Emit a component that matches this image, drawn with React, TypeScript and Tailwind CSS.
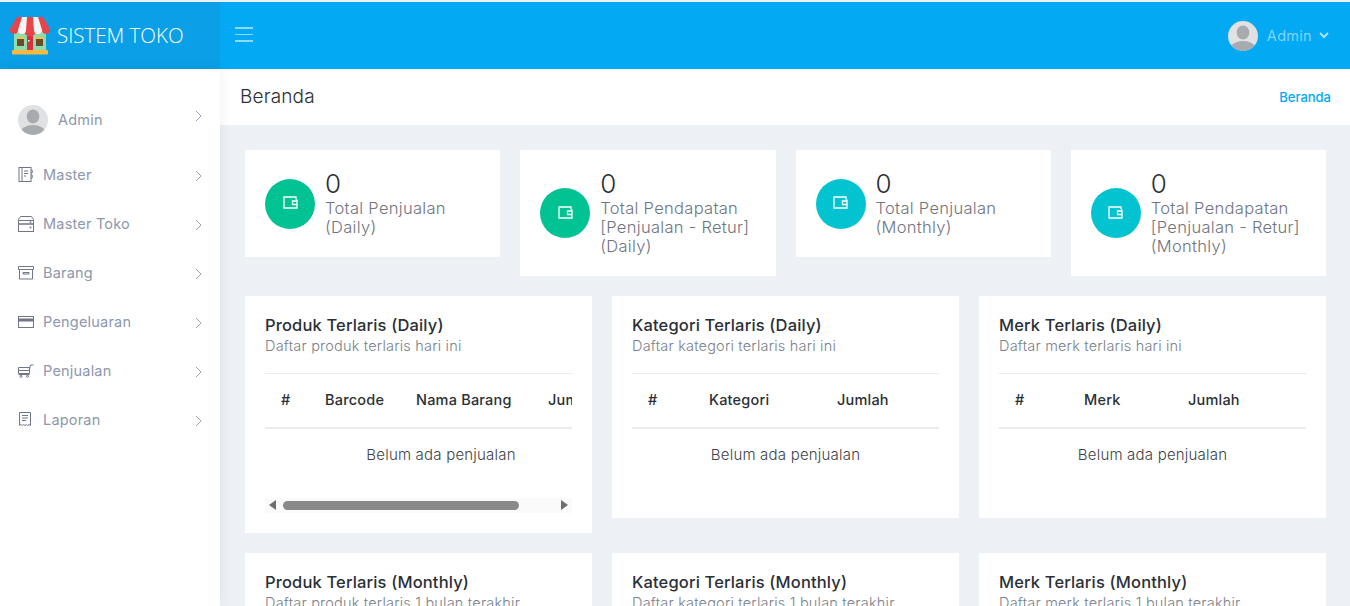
import React from "react";

const Avatar = () => (
  <svg viewBox="0 0 30 30" className="w-[30px] h-[30px] shrink-0 block">
    <defs>
      <clipPath id="av"><circle cx="15" cy="15" r="15" /></clipPath>
    </defs>
    <g clipPath="url(#av)">
      <rect width="30" height="30" fill="#dfe1e3" />
      <ellipse cx="15" cy="11.5" rx="6.3" ry="7" fill="#a8abae" />
      <ellipse cx="15" cy="27.5" rx="12.5" ry="7.5" fill="#a8abae" />
    </g>
  </svg>
);

const Logo = () => (
  <svg viewBox="0 0 40 38" className="w-10 h-[38px] shrink-0 block">
    <rect x="4" y="12" width="32" height="21" fill="#8fdcae" />
    <rect x="2" y="33" width="36" height="4.5" rx="1" fill="#f5b93f" />
    <rect x="7" y="20" width="7" height="9" fill="#6b4b2a" />
    <rect x="26" y="20" width="7" height="9" fill="#6b4b2a" />
    <rect x="7" y="20" width="7" height="2" fill="#f2c14e" />
    <rect x="26" y="20" width="7" height="2" fill="#f2c14e" />
    <rect x="17" y="17" width="6" height="16" fill="#d9303a" />
    <rect x="18" y="23" width="1.5" height="1.5" fill="#fff" />
    <path d="M7 0h26l7 12a4 4 0 0 1-8 1.500 4 4 0 0 1-6 0 4 4 0 0 1-12 0 4 4 0 0 1-6 0 4 4 0 0 1-8-1.500z" fill="#e8444c" />
    <path d="M12 0h5l-1 13a4 4 0 0 1-8 0zM23 0h5l4 13a4 4 0 0 1-8 0z" fill="#f4f4f4" />
  </svg>
);

const ic = "w-[15px] h-[15px] shrink-0";
const stroke = { fill: "none", stroke: "#6f768c", strokeWidth: 1 };
const Notepad = () => (
  <svg viewBox="0 0 15 15" className={ic} {...stroke}>
    <rect x="1" y="0.500" width="12" height="14" />
    <path d="M4 .5v14M6 4h4M6 6.500h4M6 9h2M13 3h1.200v3H13M13 8h1.200v3H13" />
  </svg>
);
const Server = () => (
  <svg viewBox="0 0 16 16" className="w-4 h-4 shrink-0" {...stroke}>
    <path d="M.5 8V3.500L2.500.5h11l2 3V8z" />
    <rect x="0.500" y="8" width="15" height="7.500" />
    <path d="M.5 4.500h15" />
    <circle cx="12.500" cy="6.200" r=".6" />
    <circle cx="12.500" cy="11.500" r=".6" />
  </svg>
);
const Archive = () => (
  <svg viewBox="0 0 16 15" className="w-4 h-[15px] shrink-0" {...stroke}>
    <path d="M.5 1.500h15v3H.5zM1.500 4.500v9.500h13V4.500M5 7.500h6v1.500H5z" />
  </svg>
);
const Card = () => (
  <svg viewBox="0 0 16 12" className="w-4 h-3 shrink-0">
    <rect x="0.500" y="0.500" width="15" height="11" fill="none" stroke="#6f768c" />
    <rect x="0.500" y="2.500" width="15" height="3" fill="#6f768c" />
  </svg>
);
const Cart = () => (
  <svg viewBox="0 0 16 14" className="w-4 h-[14px] shrink-0" {...stroke}>
    <path d="M.5 3.500h11v6H.5zM.5 6.500h11M11.500 5l1-4h3M.5 10.500h11" />
    <circle cx="3" cy="12.300" r="1" />
    <circle cx="9.500" cy="12.300" r="1" />
  </svg>
);
const Receipt = () => (
  <svg viewBox="0 0 14 15" className="w-[14px] h-[15px] shrink-0" {...stroke}>
    <path d="M1.500.5h11v13l-1.400-1-1.400 1-1.400-1-1.300 1-1.400-1-1.400 1-1.400-1-1.200 1zM4 3.500h6M4 6h6M4 8.500h4" />
  </svg>
);

const Chevron = ({ up = false }: { up?: boolean }) => (
  <svg viewBox="0 0 7 12" className={up ? "w-[7px] h-3 shrink-0 ml-auto -translate-y-[4px]" : "w-[7px] h-3 shrink-0 ml-auto translate-y-[1px]"} fill="none" stroke="#8d97ad" strokeWidth="0.900">
    <path d="M1 1l5 5-5 5" />
  </svg>
);

const Wallet = () => (
  <svg viewBox="0 0 15 13" className="w-[15px] h-[13px] -translate-y-[1px]" fill="none" stroke="#fff" strokeWidth="1.300">
    <path d="M14 3.500V12H1V1h12v2.500" />
    <path d="M14 5H9.500v3.500H14" />
  </svg>
);

const menu = [
  { label: "Master", icon: <Notepad /> },
  { label: "Master Toko", icon: <Server /> },
  { label: "Barang", icon: <Archive /> },
  { label: "Pengeluaran", icon: <Card /> },
  { label: "Penjualan", icon: <Cart /> },
  { label: "Laporan", icon: <Receipt /> },
];

const Stat = ({ color, label }: { color: string; label: React.ReactNode }) => (
  <div className="bg-white p-5 flex items-center gap-[10px]">
    <div className={`w-[50px] h-[50px] rounded-full flex items-center justify-center shrink-0 ${color}`}>
      <Wallet />
    </div>
    <div>
      <div className="text-[26px] leading-[27px] mb-[2px] font-light text-[#2b2f36]">0</div>
      <div className="text-[16.500px] leading-[19px] font-light text-[#6f7480] tracking-[0.300px]">{label}</div>
    </div>
  </div>
);

type Col = { label: string; cls: string };

const Panel = ({
  title,
  sub,
  cols,
  tableCls,
  scroll = false,
}: {
  title: string;
  sub: string;
  cols: Col[];
  tableCls: string;
  scroll?: boolean;
}) => (
  <div className="bg-white p-5">
    <div className="text-[16.500px] leading-[19px] font-medium text-[#2b2f36] tracking-[0.150px]">{title}</div>
    <div className="text-[14.500px] leading-[21px] font-light text-[#7a7f8a] tracking-[0.200px]">{sub}</div>
    <div className="overflow-hidden mt-[17px]">
      <table className={`table-fixed border-collapse ${tableCls}`}>
        <thead>
          <tr className="border-t border-[#e9ecef] border-b-2">
            {cols.map((c) => (
              <th key={c.label} className={`text-left pl-4 h-[54px] text-[14.500px] tracking-[0.200px] font-medium text-[#2b2f36] whitespace-nowrap ${c.cls}`}>
                {c.label}
              </th>
            ))}
          </tr>
        </thead>
        <tbody>
          <tr>
            <td colSpan={cols.length} className="text-center pt-[15px] pb-[17px] px-4 text-[15px] tracking-[0.200px] leading-[21px] font-light text-[#3e4249]">
              Belum ada penjualan
            </td>
          </tr>
        </tbody>
      </table>
    </div>
    {scroll ? (
      <div className="mt-4 h-[15px] bg-[#fafafa] flex items-center px-1">
        <span className="w-0 h-0 border-y-[5px] border-y-transparent border-r-[7px] border-r-[#6e6e6e]" />
        <span className="ml-[7px] w-[236px] h-[9px] rounded-full bg-[#8a8a8a]" />
        <span className="ml-auto w-0 h-0 border-y-[5px] border-y-transparent border-l-[7px] border-l-[#6e6e6e]" />
      </div>
    ) : (
      <div className="h-4" />
    )}
  </div>
);

const produk = [
  { label: "#", cls: "w-[44px]" },
  { label: "Barcode", cls: "w-[91px]" },
  { label: "Nama Barang", cls: "w-[132px]" },
  { label: "Jumlah", cls: "w-[85px]" },
];
const kategori = [
  { label: "#", cls: "w-[61px]" },
  { label: "Kategori", cls: "w-[128px]" },
  { label: "Jumlah", cls: "w-[118px]" },
];
const merk = [
  { label: "#", cls: "w-[69px]" },
  { label: "Merk", cls: "w-[104px]" },
  { label: "Jumlah", cls: "w-[134px]" },
];

export default function App() {
  return (
    <div className="h-screen overflow-hidden flex flex-col bg-[#edf1f5] pt-[2px] [font-family:Inter,sans-serif]">
      <header className="h-[67px] shrink-0 flex bg-[#03a9f3]">
        <div className="w-[220px] shrink-0 bg-[#0a9fe6] flex items-center pl-[10px] gap-[7px]">
          <Logo />
          <span className="text-[20.500px] font-light text-white [font-family:'Open_Sans',sans-serif]">SISTEM TOKO</span>
        </div>
        <div className="flex-1 flex items-center pl-[15px] pr-[21px]">
          <div className="flex flex-col gap-[5px] w-[18px] -translate-y-[1px]">
            <span className="h-[1.500px] bg-[#8edbfb]" />
            <span className="h-[1.500px] bg-[#8edbfb]" />
            <span className="h-[1.500px] bg-[#8edbfb]" />
          </div>
          <div className="ml-auto flex items-center">
            <Avatar />
            <span className="ml-[9px] text-[14.500px] tracking-[0.300px] text-[#80d4f9]">Admin</span>
            <svg viewBox="0 0 10 7" className="w-[10px] h-[7px] ml-[7px]" fill="none" stroke="#a8e2fb" strokeWidth="2">
              <path d="M1 1l4 4 4-4" />
            </svg>
          </div>
        </div>
      </header>
      <div className="flex-1 flex min-h-0">
        <aside className="relative z-10 w-[220px] shrink-0 bg-white pt-[21px] px-[18px] text-[14.500px] tracking-[0.200px] text-[#8d97ad] shadow-[1px_0_12px_rgba(0,0,0,0.06)]">
          <div className="h-[60px] flex items-center gap-[10px]">
            <Avatar />
            <span className="pb-[1px]">Admin</span>
            <Chevron up />
          </div>
          <nav>
            {menu.map((m) => (
              <div key={m.label} className="h-[49px] flex items-center">
                <span className="w-[25px] flex items-center">{m.icon}</span>
                <span>{m.label}</span>
                <Chevron />
              </div>
            ))}
          </nav>
        </aside>
        <main className="flex-1 min-w-0">
          <div className="h-[56px] bg-white flex items-center justify-between pl-5 pr-[19px]">
            <h1 className="text-[19px] tracking-[0.150px] font-light text-[#2b2f36]">Beranda</h1>
            <span className="text-[13px] pt-[1px] font-medium text-[#03a9f3]">Beranda</span>
          </div>
          <div className="pt-[25px] pl-[25px] pr-6 flex flex-col gap-5">
            <div className="grid grid-cols-4 gap-5 items-start">
              <Stat color="bg-[#00c292]" label={<>Total Penjualan<br />(Daily)</>} />
              <Stat color="bg-[#00c292]" label={<>Total Pendapatan<br />[Penjualan - Retur]<br />(Daily)</>} />
              <Stat color="bg-[#03c3d0]" label={<>Total Penjualan<br />(Monthly)</>} />
              <Stat color="bg-[#03c3d0]" label={<>Total Pendapatan<br />[Penjualan - Retur]<br />(Monthly)</>} />
            </div>
            <div className="grid grid-cols-3 gap-5 items-start">
              <Panel title="Produk Terlaris (Daily)" sub="Daftar produk terlaris hari ini" cols={produk} tableCls="w-[352px]" scroll />
              <Panel title="Kategori Terlaris (Daily)" sub="Daftar kategori terlaris hari ini" cols={kategori} tableCls="w-full" />
              <Panel title="Merk Terlaris (Daily)" sub="Daftar merk terlaris hari ini" cols={merk} tableCls="w-full" />
            </div>
            <div className="grid grid-cols-3 gap-5 items-start">
              <Panel title="Produk Terlaris (Monthly)" sub="Daftar produk terlaris 1 bulan terakhir" cols={produk} tableCls="w-[352px]" scroll />
              <Panel title="Kategori Terlaris (Monthly)" sub="Daftar kategori terlaris 1 bulan terakhir" cols={kategori} tableCls="w-full" />
              <Panel title="Merk Terlaris (Monthly)" sub="Daftar merk terlaris 1 bulan terakhir" cols={merk} tableCls="w-full" />
            </div>
          </div>
        </main>
      </div>
    </div>
  );
}
